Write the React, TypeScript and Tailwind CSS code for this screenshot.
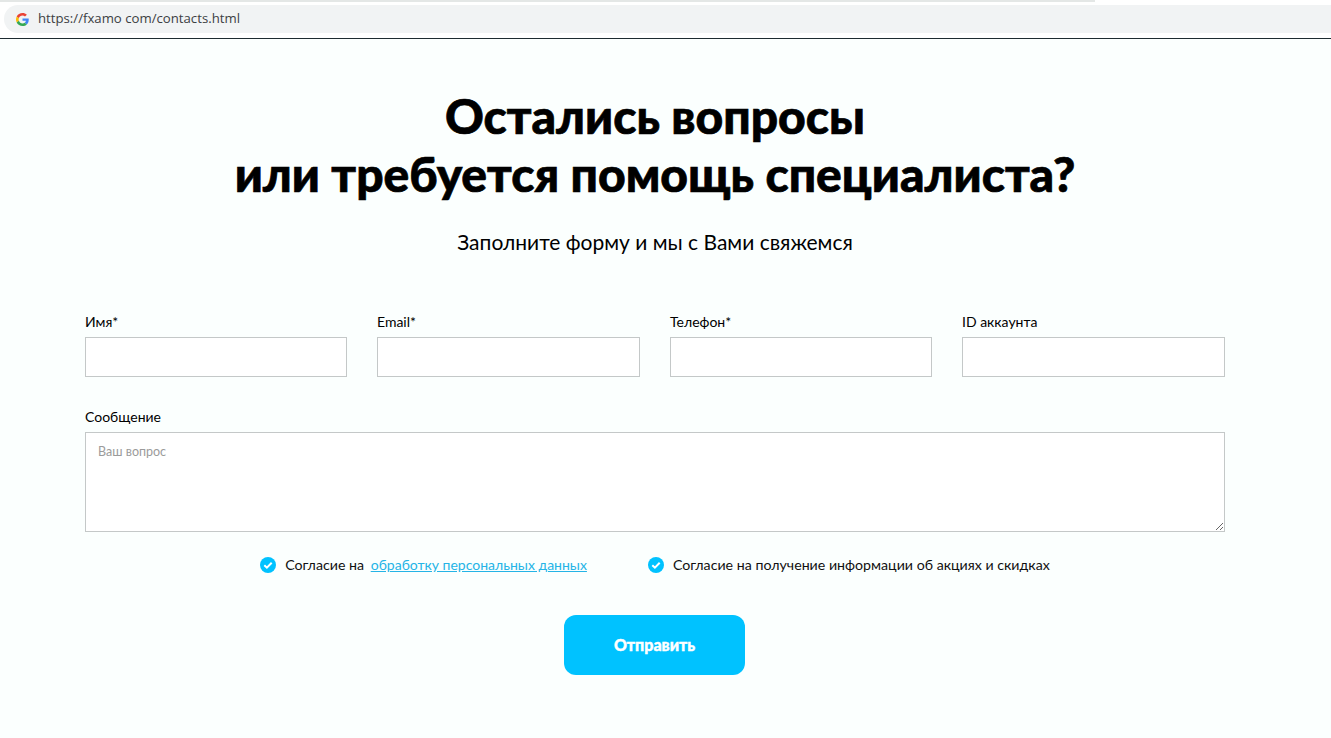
import React from 'react';

const GoogleIcon = () => (
  <svg width="13" height="13" viewBox="0 0 48 48">
    <path fill="#EA4335" d="M24 9.5c3.5 0 6.7 1.2 9.2 3.600l6.900-6.900C35.900 2.400 30.400 0 24 0 14.600 0 6.500 5.400 2.600 13.200l8 6.200C12.500 13.600 17.800 9.500 24 9.500z" />
    <path fill="#4285F4" d="M47 24.500c0-1.600-.1-3.100-.4-4.500H24v9h12.900c-.6 3-2.200 5.500-4.700 7.200l7.700 6c4.500-4.200 7.100-10.300 7.100-17.700z" />
    <path fill="#FBBC05" d="M10.600 28.600c-.5-1.400-.8-3-.8-4.600s.3-3.200.8-4.600l-8-6.200C.9 16.500 0 20.100 0 24s.9 7.500 2.600 10.800l8-6.200z" />
    <path fill="#34A853" d="M24 48c6.500 0 11.900-2.100 15.900-5.800l-7.700-6c-2.200 1.400-4.900 2.300-8.200 2.300-6.200 0-11.500-4.100-13.400-9.900l-8 6.200C6.500 42.600 14.600 48 24 48z" />
  </svg>
);

const CheckIcon = () => (
  <svg width="16" height="16" viewBox="0 0 16 16" className="shrink-0">
    <circle cx="8" cy="8" r="8" fill="#00c2ff" />
    <path d="M4.300 8.200l2.600 2.500 4.800-5" fill="none" stroke="#fff" strokeWidth="2" />
  </svg>
);

const fields = ['Имя*', 'Email*', 'Телефон*', 'ID аккаунта'];

export default function App() {
  return (
    <div className="min-h-[738px] bg-[#fbfffe] text-black font-['Lato','Noto_Sans',sans-serif] overflow-hidden">
      {/* адресная строка */}
      <div className="h-[39px] bg-white border-b border-[#1d2a30]">
        <div className="h-[2px] w-[1095px] bg-[#e4e7e6]" />
        <div className="h-[3px]" />
        <div className="h-[28px] ml-[4px] bg-[#f1f3f4] rounded-l-[14px] flex items-center pl-[12px] gap-[9px]">
          <GoogleIcon />
          <span className="text-[13.2px] text-[#3c4043] font-['Open_Sans',sans-serif]">https://fxamo com/contacts.html</span>
        </div>
      </div>

      <div className="w-[1310px] px-[85px]">
        <h1 className="mt-[48px] text-center text-[48px] leading-[58px] font-black [-webkit-text-stroke:0.7px_black]">
          Остались вопросы
          <br />
          или требуется помощь специалиста?
        </h1>
        <p className="mt-[24px] text-center text-[21px] leading-[30px]">Заполните форму и мы с Вами свяжемся</p>

        <div className="mt-[55px] grid grid-cols-[262px_263px_262px_263px] gap-x-[30px]">
          {fields.map((f) => (
            <label key={f} className="block">
              <span className="block text-[14px] leading-[20px] mb-[5px]">{f}</span>
              <input className="block w-full h-[40px] bg-white border border-[#c4c8c8] outline-none" />
            </label>
          ))}
        </div>

        <label className="block mt-[30px]">
          <span className="block text-[14px] leading-[20px] mb-[5px]">Сообщение</span>
          <textarea
            placeholder="Ваш вопрос"
            className="block w-full h-[100px] bg-white border border-[#c4c8c8] outline-none px-[12px] py-[11px] text-[12.5px] leading-[16px] placeholder:text-[#9b9b9b]"
          />
        </label>

        <div className="mt-[23px] flex justify-center gap-[61px] text-[14.2px] leading-[20px] text-[#111]">
          <div className="flex items-center gap-[9px]">
            <CheckIcon />
            <span>
              Согласие на{' '}
              <a href="#" className="ml-[3px] text-[14px] text-[#25b4e6] underline">обработку персональных данных</a>
            </span>
          </div>
          <div className="flex items-center gap-[9px]">
            <CheckIcon />
            <span>Согласие на получение информации об акциях и скидках</span>
          </div>
        </div>

        <div className="mt-[40px] flex justify-center pr-[1px]">
          <button className="w-[181px] h-[60px] rounded-[12px] bg-[#00c2ff] text-white text-[16px] font-black [-webkit-text-stroke:0.4px_white]">Отправить</button>
        </div>
      </div>
    </div>
  );
}
